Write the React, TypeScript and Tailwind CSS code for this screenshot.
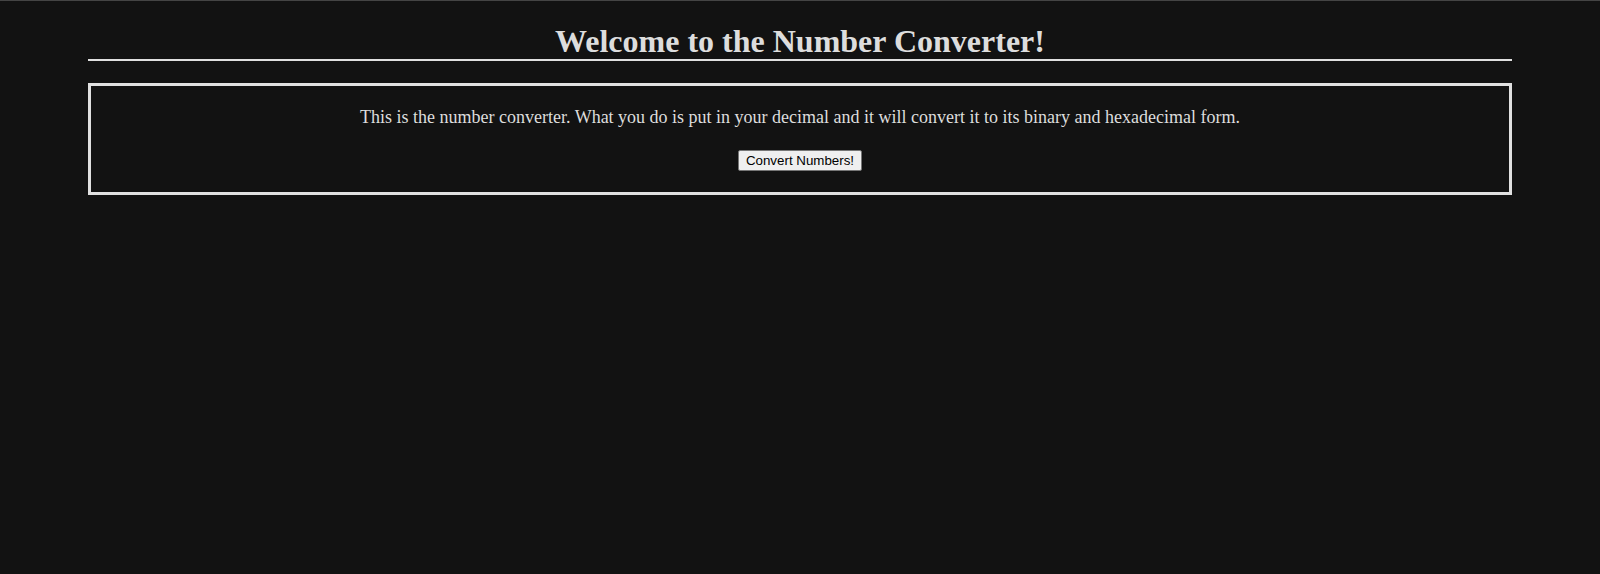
export default function App() {
  return (
    <div className="min-h-[574px] w-full bg-[#121212] border-t border-[#444444] font-['Liberation_Serif',serif] text-[#dddddd]">
      <div className="w-[1424px] mx-auto pt-[22px]">
        {/* Heading */}
        <h1 className="text-[32px] font-bold leading-[36px] text-center border-b-2 border-[#e0e0e0]">
          Welcome to the Number Converter!
        </h1>

        {/* Converter box */}
        <div className="mt-[22px] border-[3px] border-[#e0e0e0] pt-[21px] pb-[21px] flex flex-col items-center">
          <p className="text-[18px] leading-[21px]">
            This is the number converter. What you do is put in your decimal and it will convert it to its binary and hexadecimal form.
          </p>
          <button className="mt-[22px] h-[21px] px-[7px] bg-[#efefef] border border-[#767676] rounded-[2px] text-black text-[13.33px] leading-[15px] font-['Liberation_Sans',Arial,sans-serif]">
            Convert Numbers!
          </button>
        </div>
      </div>
    </div>
  );
}
